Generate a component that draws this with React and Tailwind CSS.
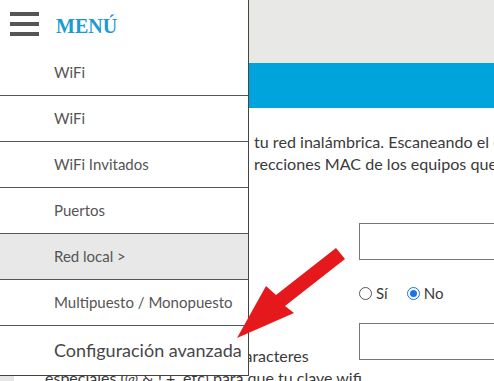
export default function App() {
  const items = [
    { label: "WiFi" },
    { label: "WiFi" },
    { label: "WiFi Invitados" },
    { label: "Puertos" },
    { label: "Red local >", active: true },
    { label: "Multipuesto / Monopuesto" },
  ];

  return (
    <div className="relative w-[494px] h-[381px] overflow-hidden bg-white font-['Lato',sans-serif]">
      {/* Página de fondo */}
      <div className="h-[63px] bg-[#e8e8e6]" />
      <div className="h-[45px] bg-[#00a4dc]" />
      <div className="flex">
        <div className="w-[14px] shrink-0 bg-[#e6e6e6]" />
        <div className="pl-[31px] pt-[23px] text-[16px] leading-[22px] text-[#3a3a3a]">
          <p className="whitespace-nowrap text-[16.1px]">
            <span className="inline-block w-[209px] overflow-hidden align-bottom">Filtra los equipos</span>
            tu red inalámbrica. Escaneando el entorno
          </p>
          <p className="whitespace-nowrap text-[16.1px]">
            <span className="inline-block w-[209px] overflow-hidden align-bottom">podrás ver las</span>
            recciones MAC de los equipos que se conectan
          </p>

          <div className="mt-[48px] flex">
            <div className="w-[314px] shrink-0 pt-[8px]">Nombre de la red</div>
            <div className="w-[150px] h-[37px] shrink-0 border border-[#777]" />
          </div>

          <div className="mt-[22px] flex h-[22px] items-center">
            <div className="w-[314px] shrink-0">Ocultar red</div>
            <label className="flex items-center gap-[4px] text-[15px]">
              <span className="w-[13px] h-[13px] rounded-full border border-[#555] bg-white" />
              Sí
            </label>
            <label className="ml-[19px] flex items-center gap-[4px] text-[15px]">
              <span className="flex w-[13px] h-[13px] items-center justify-center rounded-full border border-[#1a73e8] bg-white">
                <span className="w-[7px] h-[7px] rounded-full bg-[#1a73e8]" />
              </span>
              No
            </label>
          </div>

          <div className="mt-[19px] flex">
            <div className="w-[314px] shrink-0 whitespace-nowrap">
              <div>Contraseña</div>
              <div>combinar letras, números y caracteres</div>
              <div>especiales (@ &amp; ! +, etc) para que tu clave wifi</div>
            </div>
            <div className="w-[150px] h-[37px] shrink-0 border border-[#777]" />
          </div>
        </div>
      </div>

      {/* Menú desplegado */}
      <div className="absolute left-0 top-0 w-[249px] bg-white border-r border-b border-[#444]">
        <div className="flex h-[50px] items-center pl-[10px] pb-[2px]">
          <div className="flex flex-col gap-[6px]">
            <span className="block w-[29px] h-[4px] bg-[#555]" />
            <span className="block w-[29px] h-[4px] bg-[#555]" />
            <span className="block w-[29px] h-[4px] bg-[#555]" />
          </div>
          <span className="ml-[17px] mt-[4px] font-['Liberation_Serif',serif] text-[20px] font-bold text-[#1b9bd3]">
            MENÚ
          </span>
        </div>
        {items.map((it, i) => (
          <div
            key={i}
            className={
              "flex h-[46px] items-center pl-[54px] text-[15px] text-[#555] border-b border-[#555] " +
              (it.active ? "bg-[#e8e8e8]" : "bg-white")
            }
          >
            {it.label}
          </div>
        ))}
        <div className="flex h-[49px] items-center whitespace-nowrap pl-[54px] text-[18px] text-[#474747]">
          Configuración avanzada
        </div>
      </div>

      {/* Flecha roja */}
      <svg className="absolute left-0 top-0" width="494" height="381" viewBox="0 0 494 381">
        <polygon
          points="237,338 266,286 276,295 336,248 345,259 285,306 294,313"
          fill="#e5191c"
        />
      </svg>
    </div>
  );
}
